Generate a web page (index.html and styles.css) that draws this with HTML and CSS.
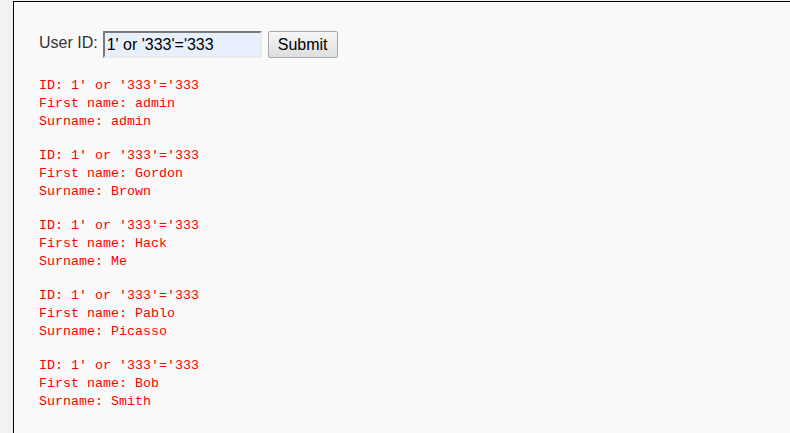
FILE: index.html
```html
<!DOCTYPE html>
<html lang="en">
<head>
  <meta charset="UTF-8">
  <title>SQL Injection</title>
  <link rel="stylesheet" href="styles.css">
</head>
<body>

  <div class="frame">
    <div class="vulnerable-area">
      <form class="query-form" onsubmit="return false;">
        <label for="user-id">User ID:</label>
        <input type="text" id="user-id" class="user-input" value="1' or '333'='333">
        <button type="submit" class="submit-btn">Submit</button>
      </form>

      <pre class="result">ID: 1' or '333'='333
First name: admin
Surname: admin</pre>
      <pre class="result">ID: 1' or '333'='333
First name: Gordon
Surname: Brown</pre>
      <pre class="result">ID: 1' or '333'='333
First name: Hack
Surname: Me</pre>
      <pre class="result">ID: 1' or '333'='333
First name: Pablo
Surname: Picasso</pre>
      <pre class="result">ID: 1' or '333'='333
First name: Bob
Surname: Smith</pre>
    </div>
  </div>

</body>
</html>
```

FILE: styles.css
```css
body {
  margin: 0;
  height: 433px;
  overflow: hidden;
  font-family: "Liberation Sans", Arial, sans-serif;
  background-color: #f2f2f2;
  padding: 1px 0 0 13px;
  box-sizing: border-box;
}

.frame {
  height: 100%;
  background-color: #f8f9f8;
  border-top: 1px solid #000;
  border-left: 1px solid #000;
}

.vulnerable-area {
  padding: 29px 0 0 25px;
}

/* Form */
.query-form {
  display: flex;
  align-items: center;
  height: 27px;
}

.query-form label {
  font-size: 16px;
  color: #333;
  margin-right: 5px;
  position: relative;
  top: -2px;
}

.user-input {
  width: 159px;
  height: 27px;
  box-sizing: border-box;
  padding: 0 2px;
  font-family: "Liberation Sans", Arial, sans-serif;
  font-size: 16px;
  color: #000;
  background-color: #e8f0fe;
  border: 2px solid;
  border-color: #7a7a7a #eaeaea #eaeaea #7a7a7a;
  margin: 0;
}

.submit-btn {
  margin-left: 6px;
  width: 70px;
  height: 27px;
  font-family: "Liberation Sans", Arial, sans-serif;
  font-size: 16px;
  color: #000;
  background: linear-gradient(#f6f6f6, #dedede);
  border: 1px solid #a9a9a9;
  border-radius: 2px;
  padding: 0;
  cursor: pointer;
}

/* Results */
.result {
  font-family: "Liberation Mono", "Courier New", monospace;
  font-size: 13.33px;
  line-height: 18px;
  color: #f00;
  margin: 16px 0;
}

.query-form + .result {
  margin-top: 19px;
}
```
